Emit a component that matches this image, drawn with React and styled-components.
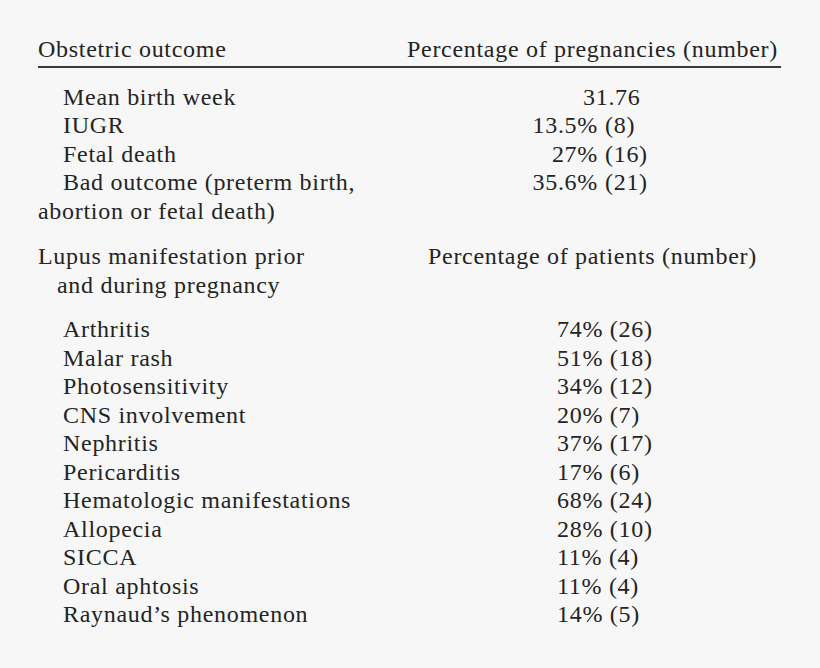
import styled, { createGlobalStyle } from 'styled-components'

const Global = createGlobalStyle`
    html, body {
        margin: 0;
        padding: 0;
        background: #f7f7f7;
    }
    body {
        font-family: "Liberation Serif", "Times New Roman", serif;
        color: #242424;
    }
`

const Page = styled.div`
    width: 820px;
    height: 668px;
    padding: 35px 39px 0 38px;
    box-sizing: border-box;
    font-size: 24px;
    letter-spacing: 0.7px;
    line-height: 28.5px;
    white-space: nowrap;
`

const Row = styled.div`
    display: grid;
    grid-template-columns: 369px 1fr;
`

const HeadRow = styled(Row)`
    border-bottom: 2px solid #3a3a3a;
    padding-bottom: 2px;
    margin-bottom: 15px;
`

const Section = styled.div`
    margin-top: ${p => p.$gap || 0}px;
`

const Label = styled.div`
    padding-left: ${p => p.$pad || 0}px;
    text-indent: ${p => p.$indent || 0}px;
`

const Value = styled.div`
    padding-left: ${p => p.$pad || 0}px;
    display: flex;
`

const Pct = styled.span`
    display: inline-block;
    width: 191px;
    text-align: right;
`

const Count = styled.span`
    margin-left: 7px;
`

const outcomes = [
    { label: 'IUGR', pct: '13.5%', n: '(8)' },
    { label: 'Fetal death', pct: '27%', n: '(16)' },
]

const manifestations = [
    ['Arthritis', '74% (26)'],
    ['Malar rash', '51% (18)'],
    ['Photosensitivity', '34% (12)'],
    ['CNS involvement', '20% (7)'],
    ['Nephritis', '37% (17)'],
    ['Pericarditis', '17% (6)'],
    ['Hematologic manifestations', '68% (24)'],
    ['Allopecia', '28% (10)'],
    ['SICCA', '11% (4)'],
    ['Oral aphtosis', '11% (4)'],
    ['Raynaud\u2019s phenomenon', '14% (5)'],
]

function App() {
    return (
        <Page>
            <Global />
            <HeadRow>
                <Label>Obstetric outcome</Label>
                <Value>Percentage of pregnancies (number)</Value>
            </HeadRow>
            <Row>
                <Label $pad={25}>Mean birth week</Label>
                <Value $pad={176}>31.76</Value>
            </Row>
            {outcomes.map(o => (
                <Row key={o.label}>
                    <Label $pad={25}>{o.label}</Label>
                    <Value><Pct>{o.pct}</Pct><Count>{o.n}</Count></Value>
                </Row>
            ))}
            <Row>
                <Label $indent={25}>Bad outcome (preterm birth,<br />abortion or fetal death)</Label>
                <Value><Pct>35.6%</Pct><Count>(21)</Count></Value>
            </Row>
            <Section $gap={17}>
                <Row>
                    <Label $pad={19} $indent={-19}>Lupus manifestation prior<br />and during pregnancy</Label>
                    <Value $pad={21}>Percentage of patients (number)</Value>
                </Row>
            </Section>
            <Section $gap={16}>
                {manifestations.map(([label, value]) => (
                    <Row key={label}>
                        <Label $pad={25}>{label}</Label>
                        <Value $pad={150}>{value}</Value>
                    </Row>
                ))}
            </Section>
        </Page>
    )
}

export default App
